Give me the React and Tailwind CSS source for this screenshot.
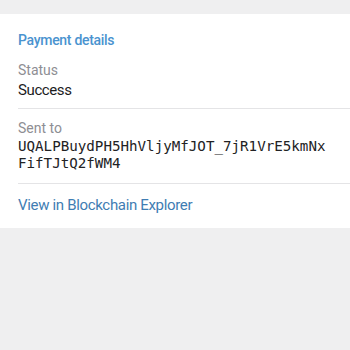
import React from 'react';

function Row({ label, children }) {
  return (
    <div className="flex flex-col">
      <span className="text-[14px] leading-[20px] text-[#8e8e93]">{label}</span>
      {children}
    </div>
  );
}

export default function App() {
  return (
    <div className="h-[350px] w-[350px] bg-[#efeff0] font-['Roboto',sans-serif]">
      <div className="h-[14px]" />
      <div className="bg-white pl-[18px]">
        {/* Header */}
        <div className="pt-[16px] pb-[10px]">
          <h3 className="text-[14px] leading-[20px] font-medium tracking-[-0.3px] text-[#4a93cf]">Payment details</h3>
        </div>

        <div className="border-b border-[#e4e4e6] pb-[8px] pr-[18px]">
          <Row label="Status">
            <span className="text-[15px] leading-[20px] tracking-[-0.4px] text-[#1c1c1e]">Success</span>
          </Row>
        </div>

        <div className="border-b border-[#e4e4e6] pt-[9px] pb-[11px] pr-[18px]">
          <Row label="Sent to">
            <span className="break-all font-['DejaVu_Sans_Mono',monospace] text-[14.2px] leading-[17px] text-[#222224]">
              UQALPBuydPH5HhVljyMfJOT_7jR1VrE5kmNxFifTJtQ2fWM4
            </span>
          </Row>
        </div>

        <div className="pt-[9px] pb-[11px]">
          <a className="text-[15px] leading-[20px] tracking-[-0.33px] text-[#3f7db3]">View in Blockchain Explorer</a>
        </div>
      </div>
    </div>
  );
}
